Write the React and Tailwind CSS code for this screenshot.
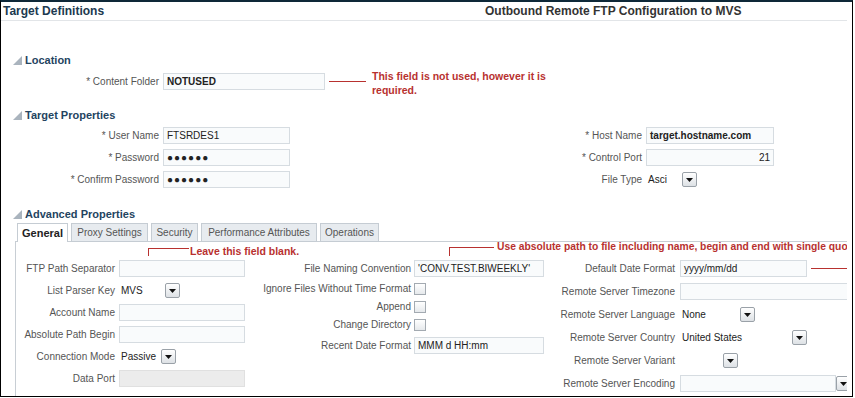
import React from "react"

const lbl = "text-[10px] text-[#555] text-right leading-[17px] whitespace-nowrap shrink-0"
const inp = "h-[17px] border border-[#d6dce1] bg-[#f9fbfc] text-[10px] text-[#222] leading-[15px] px-[3px] whitespace-nowrap overflow-hidden shrink-0"
const red = "text-[#b8312f]"

function Section({ title }) {
  return (
    <div className="flex items-center h-[14px] pl-[12px] gap-[3px]">
      <svg width="9" height="9" viewBox="0 0 9 9">
        <polygon points="9,0 9,9 0,9" fill="#aab4be" />
      </svg>
      <span className="text-[11px] font-bold text-[#24445f]">{title}</span>
    </div>
  )
}

function DropBtn() {
  return (
    <div className="w-[15px] h-[15px] border border-[#9aa1a8] rounded-[2px] bg-gradient-to-b from-white to-[#dde1e5] flex items-center justify-center shrink-0">
      <svg width="7" height="4" viewBox="0 0 7 4">
        <polygon points="0,0 7,0 3.5,4" fill="#111" />
      </svg>
    </div>
  )
}

function Select({ value, w }) {
  return (
    <div className="flex items-center h-[17px] shrink-0">
      <span className="text-[10px] text-[#222] pl-[2px] whitespace-nowrap" style={{ width: w }}>{value}</span>
      <DropBtn />
    </div>
  )
}

function Check() {
  return <div className="w-[12px] h-[12px] border border-[#a3aab1] bg-gradient-to-b from-white to-[#e6e9ec] shrink-0" />
}

function Row({ label, lw, gap, children }) {
  return (
    <div className="flex items-center">
      <span className={lbl} style={{ width: lw, marginRight: gap }}>{label}</span>
      {children}
    </div>
  )
}

export default function App() {
  const tabs = [
    { name: "General", w: "w-[51px]", active: true },
    { name: "Proxy Settings", w: "w-[77px]" },
    { name: "Security", w: "w-[47px]" },
    { name: "Performance Attributes", w: "w-[116px]" },
    { name: "Operations", w: "w-[59px]" },
  ]

  return (
    <div className="w-[855px] h-[398px] bg-white font-['Liberation_Sans',Arial,sans-serif]">
      <div className="w-[853px] h-[397px] border-x border-b border-black border-t-2 border-t-[#0e2838]">
        <div className="w-[846px] h-full overflow-hidden">

          {/* header */}
          <div className="h-[19px] flex items-center border-b border-[#e2e5e8]">
            <div className="w-[484px] pl-[2px] text-[12px] font-bold text-[#20394f]">Target Definitions</div>
            <div className="text-[12px] font-bold text-[#333]">Outbound Remote FTP Configuration to MVS</div>
          </div>

          {/* Location */}
          <div className="mt-[32px]">
            <Section title="Location" />
          </div>
          <div className="mt-[6px] flex items-start">
            <span className={lbl} style={{ width: 158 }}>* Content Folder</span>
            <div className={`${inp} ml-[4px] w-[162px] font-bold`}>NOTUSED</div>
            <div className="ml-[4px] mt-[8px] w-[37px] h-px bg-[#b8312f]" />
            <div className={`ml-[6px] -mt-[4px] w-[200px] text-[10.5px] font-bold leading-[14px] ${red}`}>
              This field is not used, however it is required.
            </div>
          </div>

          {/* Target Properties */}
          <div className="mt-[11px]">
            <Section title="Target Properties" />
          </div>
          <div className="mt-[5px] flex">
            <div className="w-[499px] flex flex-col gap-[5px]">
              <Row label="* User Name" lw={158} gap={4}>
                <div className={`${inp} w-[127px]`}>FTSRDES1</div>
              </Row>
              <Row label="* Password" lw={158} gap={4}>
                <div className={`${inp} w-[127px] font-bold text-[8px] tracking-[1px]`}>●●●●●●</div>
              </Row>
              <Row label="* Confirm Password" lw={158} gap={4}>
                <div className={`${inp} w-[127px] font-bold text-[8px] tracking-[1px]`}>●●●●●●</div>
              </Row>
            </div>
            <div className="flex flex-col gap-[5px]">
              <Row label="* Host Name" lw={142} gap={4}>
                <div className={`${inp} w-[128px] font-bold`}>target.hostname.com</div>
              </Row>
              <Row label="* Control Port" lw={142} gap={4}>
                <div className={`${inp} w-[128px] text-right`}>21</div>
              </Row>
              <Row label="File Type" lw={142} gap={4}>
                <Select value="Asci" w={36} />
              </Row>
            </div>
          </div>

          {/* Advanced Properties */}
          <div className="mt-[19px]">
            <Section title="Advanced Properties" />
          </div>
          <div className="mt-[2px] pl-[16px] h-[19px] -mb-px relative z-10 flex items-end gap-[3px]">
            {tabs.map((t) =>
              t.active ? (
                <div key={t.name} className={`${t.w} h-[19px] border-x border-t border-[#c5ccd3] bg-white flex items-center justify-center text-[11px] font-bold text-[#222]`}>
                  {t.name}
                </div>
              ) : (
                <div key={t.name} className={`${t.w} h-[19px] border border-[#c5ccd3] bg-[#e7ebef] flex items-center justify-center text-[10px] text-[#555]`}>
                  {t.name}
                </div>
              )
            )}
          </div>

          <div className="ml-[14px] w-[900px] h-[200px] border-l border-t border-[#c8ced4] relative pt-[18px] flex">
            {/* callouts */}
            <div className="absolute left-[132px] top-[6px] w-[41px] h-[8px] border-l border-t border-[#b8312f]" />
            <div className={`absolute left-[174px] top-[3px] text-[10.5px] font-bold leading-[12px] whitespace-nowrap ${red}`}>Leave this field blank.</div>
            <div className="absolute left-[433px] top-[5px] w-[45px] h-[9px] border-l border-t border-[#b8312f]" />
            <div className={`absolute left-[481px] top-[-1px] text-[10.3px] font-bold leading-[12px] whitespace-nowrap ${red}`}>Use absolute path to file including name, begin and end with single quo</div>

            {/* col 1 */}
            <div className="w-[234px] flex flex-col gap-[5px] shrink-0">
              <Row label="FTP Path Separator" lw={99} gap={4}><div className={`${inp} w-[126px]`} /></Row>
              <Row label="List Parser Key" lw={99} gap={4}><Select value="MVS" w={46} /></Row>
              <Row label="Account Name" lw={99} gap={4}><div className={`${inp} w-[126px]`} /></Row>
              <Row label="Absolute Path Begin" lw={99} gap={4}><div className={`${inp} w-[126px]`} /></Row>
              <Row label="Connection Mode" lw={99} gap={4}><Select value="Passive" w={42} /></Row>
              <Row label="Data Port" lw={99} gap={4}><div className="h-[17px] w-[126px] border border-[#e0e0e0] bg-[#ececec]" /></Row>
            </div>

            {/* col 2 */}
            <div className="w-[298px] flex flex-col gap-[6px] shrink-0">
              <Row label="File Naming Convention" lw={161} gap={3}>
                <div className={`${inp} w-[130px]`}>'CONV.TEST.BIWEEKLY'</div>
              </Row>
              {["Ignore Files Without Time Format", "Append", "Change Directory"].map((l) => (
                <div key={l} className="flex items-center h-[12px]">
                  <span className={`${lbl} !leading-[12px]`} style={{ width: 161, marginRight: 3 }}>{l}</span>
                  <Check />
                </div>
              ))}
              <Row label="Recent Date Format" lw={161} gap={3}>
                <div className={`${inp} w-[130px]`}>MMM d HH:mm</div>
              </Row>
            </div>

            {/* col 3 */}
            <div className="flex flex-col gap-[6px] shrink-0">
              <Row label="Default Date Format" lw={127} gap={5}>
                <div className={`${inp} w-[127px]`}>yyyy/mm/dd</div>
                <div className="ml-[4px] w-[40px] h-px bg-[#b8312f]" />
              </Row>
              <Row label="Remote Server Timezone" lw={127} gap={5}><div className={`${inp} w-[200px]`} /></Row>
              <Row label="Remote Server Language" lw={127} gap={5}><Select value="None" w={60} /></Row>
              <Row label="Remote Server Country" lw={127} gap={5}><Select value="United States" w={112} /></Row>
              <Row label="Remote Server Variant" lw={127} gap={5}><Select value="" w={43} /></Row>
              <Row label="Remote Server Encoding" lw={127} gap={5}>
                <div className="flex items-center">
                  <div className={`${inp} w-[156px]`} />
                  <DropBtn />
                </div>
              </Row>
            </div>
          </div>

        </div>
      </div>
    </div>
  )
}
